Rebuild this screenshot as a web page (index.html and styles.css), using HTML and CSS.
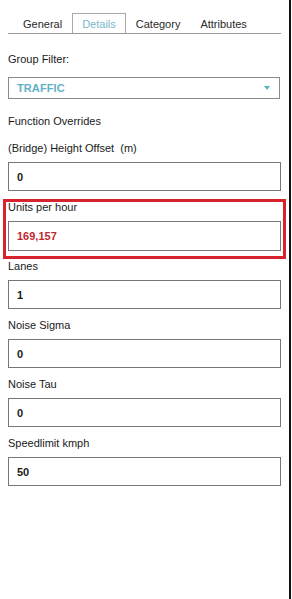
FILE: index.html
```html
<!DOCTYPE html>
<html>
<head>
<meta charset="utf-8">
<link rel="stylesheet" href="styles.css">
</head>
<body>
<div class="panel">
  <div class="tabs">
    <div class="tab">General</div>
    <div class="tab active">Details</div>
    <div class="tab">Category</div>
    <div class="tab">Attributes</div>
  </div>
  <div class="content">
    <div class="label group-label">Group Filter:</div>
    <div class="select"><span class="select-text">TRAFFIC</span><span class="arrow"></span></div>
    <div class="label section">Function Overrides</div>
    <div class="label bridge">(Bridge) Height Offset&nbsp; (m)</div>
    <div class="input">0</div>
    <div class="highlight">
      <div class="label hl-label">Units per hour</div>
      <div class="input red">169,157</div>
    </div>
    <div class="field first">
      <div class="label">Lanes</div>
      <div class="input">1</div>
    </div>
    <div class="field">
      <div class="label">Noise Sigma</div>
      <div class="input">0</div>
    </div>
    <div class="field">
      <div class="label">Noise Tau</div>
      <div class="input">0</div>
    </div>
    <div class="field">
      <div class="label">Speedlimit kmph</div>
      <div class="input">50</div>
    </div>
  </div>
</div>
</body>
</html>
```
FILE: styles.css
```css
html, body {
  margin: 0;
  padding: 0;
  background: #fff;
}
body {
  font-family: "Liberation Sans", Arial, sans-serif;
  font-size: 11px;
  color: #1a1a1a;
}
.panel {
  width: 291px;
  height: 599px;
  border-right: 2px solid #111;
  box-sizing: border-box;
}
.tabs {
  display: flex;
  margin: 0 0 0 8px;
  width: 273px;
  padding: 13px 0 0 5px;
  box-sizing: border-box;
  border-bottom: 1px solid #9a9a9a;
}
.tab {
  padding: 3px 9px 2px;
  line-height: 14px;
  border: 1px solid transparent;
  border-bottom: none;
  font-size: 11px;
  color: #2a2a2a;
}
.tab.active {
  border-color: #a8a8a8;
  color: #79b9cc;
}
.content {
  padding: 0 0 0 8px;
}
.label {
  line-height: 14px;
  color: #1a1a1a;
}
.group-label {
  margin-top: 18px;
}
.select {
  margin-top: 11px;
  width: 272px;
  height: 22px;
  box-sizing: border-box;
  border: 1px solid #8a8a8a;
  display: flex;
  align-items: center;
  justify-content: space-between;
  padding: 0 9px 0 8px;
}
.select-text {
  color: #5fb0c7;
  font-weight: bold;
  font-size: 11px;
  letter-spacing: 0.1px;
}
.arrow {
  width: 0;
  height: 0;
  border-left: 3px solid transparent;
  border-right: 3px solid transparent;
  border-top: 4px solid #5fb0c7;
}
.section {
  margin-top: 15px;
}
.bridge {
  margin-top: 13px;
}
.input {
  margin-top: 7px;
  width: 273px;
  height: 29px;
  box-sizing: border-box;
  border: 1px solid #777;
  padding: 0 8px;
  display: flex;
  align-items: center;
  font-weight: bold;
  color: #1a1a1a;
}
.input.red {
  color: #c4262e;
  margin-top: 9px;
  height: 30px;
}
.highlight {
  margin: 8px 0 0 -5px;
  width: 283px;
  box-sizing: border-box;
  border: 3px solid #d8232f;
  padding: 0 0 5px 2px;
}
.hl-label {
  line-height: 10px;
}
.field {
  margin-top: 9px;
}
.field.first {
  margin-top: 0;
}
```
